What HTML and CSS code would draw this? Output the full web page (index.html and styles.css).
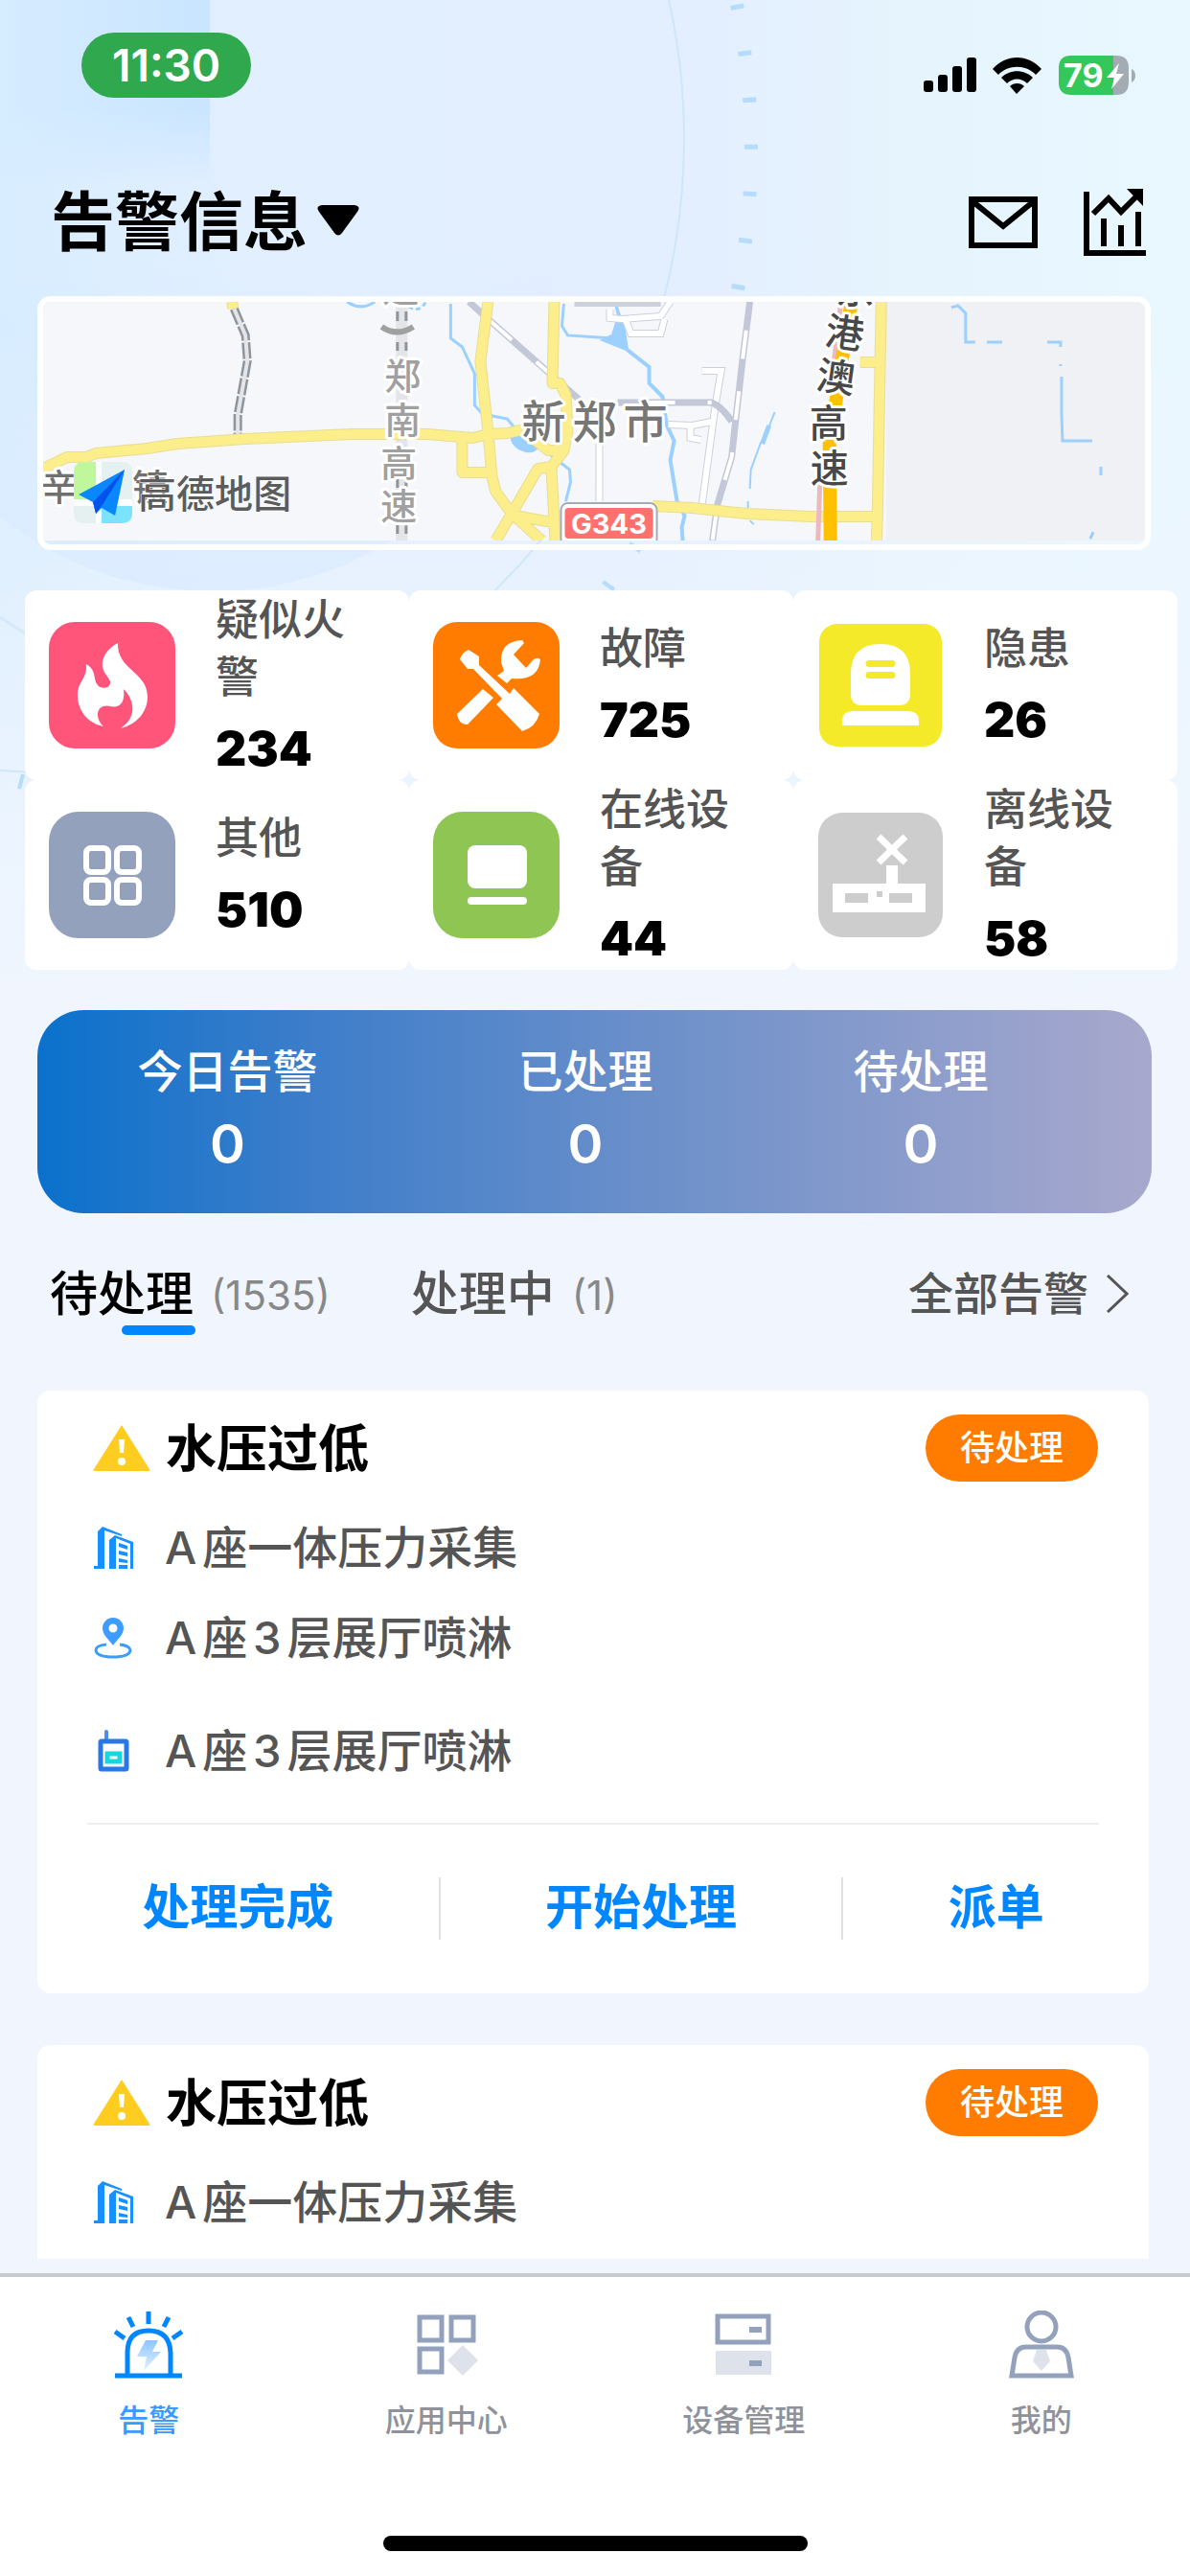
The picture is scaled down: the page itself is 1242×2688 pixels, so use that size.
FILE: index.html
```html
<!DOCTYPE html>
<html lang="zh-CN">
<head>
<meta charset="utf-8">
<meta name="viewport" content="width=device-width, initial-scale=1">
<title>告警信息</title>
<link rel="stylesheet" href="styles.css">
</head>
<body>
<svg class="backdrop" viewBox="0 0 1242 1100" preserveAspectRatio="xMidYMin slice" aria-hidden="true">
  <defs>
    <linearGradient id="sky" x1="0" x2="1" y1="0" y2="0">
      <stop offset="0" stop-color="#d8edff"/><stop offset=".2" stop-color="#e1efff"/><stop offset=".55" stop-color="#e3eeff"/><stop offset=".8" stop-color="#e6f5fd"/><stop offset="1" stop-color="#e9f7ff"/>
    </linearGradient>
    <linearGradient id="fade" x1="0" x2="0" y1="0" y2="1">
      <stop offset="0" stop-color="#f1f6fe" stop-opacity="0"/><stop offset=".3" stop-color="#f1f6fe" stop-opacity="0"/><stop offset=".95" stop-color="#f1f6fe"/>
    </linearGradient>
    <linearGradient id="corner" x1="0" x2="1" y1="0" y2="0">
      <stop offset="0" stop-color="#d6ecff"/><stop offset="1" stop-color="#c9e5ff"/>
    </linearGradient>
    <linearGradient id="cornerFade" x1="0" x2="0" y1="0" y2="1">
      <stop offset="0" stop-color="#fff"/><stop offset=".6" stop-color="#fff"/><stop offset="1" stop-color="#000"/>
    </linearGradient>
    <linearGradient id="disc" x1="0" x2="0" y1="0" y2="1">
      <stop offset=".5" stop-color="#d4e8ff" stop-opacity="0"/><stop offset="1" stop-color="#d4e8ff" stop-opacity=".5"/>
    </linearGradient>
    <mask id="cornerMask"><rect width="219" height="190" fill="url(#cornerFade)"/></mask>
  </defs>
  <rect width="1242" height="1100" fill="url(#sky)"/>
  <rect width="219" height="190" fill="url(#corner)" mask="url(#cornerMask)"/>
  <rect width="1242" height="1100" fill="url(#fade)"/>
  <circle cx="222" cy="260" r="357" fill="url(#disc)"/>
  <circle cx="53" cy="145" r="661" fill="none" stroke="#cfe6fb" stroke-width="2"/>
  <path d="M767 -5 A772 772 0 0 1 634 613" fill="none" stroke="#b5dcfb" stroke-width="14" stroke-dasharray="5 44" stroke-dashoffset="39"/>
  <path d="M24 808L20 823" stroke="#b5dcfb" stroke-width="4"/>
  <path d="M0 644L28 662" stroke="#d5e9fb" stroke-width="3"/>
</svg>
<div class="screen">
  <div class="status">
    <time class="clock">11:30</time>
    <svg class="status-icons" width="222" height="44" viewBox="0 0 222 44" role="img" aria-label="信号、无线网络与电量">
      <rect x="0" y="26" width="10" height="12" rx="3"/><rect x="15" y="20" width="10" height="18" rx="3"/><rect x="30" y="11" width="10" height="27" rx="3"/><rect x="45" y="2" width="10" height="36" rx="3"/>
      <path d="M72 14C86 -2 109 -2 123 14L117 20C107 9 88 9 78 20Z"/><path d="M81 23C90 14 105 14 114 23L108 29C102 23 93 23 87 29Z"/><path d="M90 32C94 28 101 28 105 32L97 40Z"/>
      <path d="M154 0H198V41H154Q141 41 141 28V13Q141 0 154 0Z" fill="#34c759"/><path d="M198 0H201Q214 0 214 13V28Q214 41 201 41H198Z" fill="#a3abb3"/><path d="M217 14Q221 16 221 21Q221 26 217 28Z" fill="#a3abb3"/>
      <text x="146" y="33" class="battery-text">79</text>
      <path d="M204 8L191 23H199L196 35L209 19H201Z" fill="#fff"/>
    </svg>
  </div>

  <header class="topbar">
    <button class="title" type="button">告警信息
      <svg width="44" height="34" viewBox="0 0 44 34" aria-hidden="true"><path d="M5 1H39Q46 2 42 8L26 30Q22 35 18 30L2 8Q-2 2 5 1Z"/></svg>
    </button>
    <div class="tools">
      <button type="button" aria-label="消息"><svg width="72" height="54" viewBox="0 0 72 54" fill="none" stroke="#000" stroke-width="6"><path d="M3 3H69V51H3Z"/><path d="M4 5L36 31L68 5"/></svg></button>
      <button type="button" aria-label="统计"><svg width="66" height="70" viewBox="0 0 66 70" fill="none" stroke="#000" stroke-width="6"><path d="M3 3V67H65M21 31V60M39 38V60M57 24V60"/><path d="M10 26L26 10L39 24L56 7"/><path d="M45 0H62V18Z" fill="#000" stroke="none"/></svg></button>
    </div>
  </header>

  <section class="map" aria-label="地图">
    <svg viewBox="46 315 1149 249" preserveAspectRatio="xMidYMid slice">
      <rect x="46" y="315" width="1149" height="249" fill="#f5f7fb"/>
      <rect x="925" y="315" width="270" height="249" fill="#eff1f4"/>
      <g fill="none" stroke="#9bd0ff" stroke-width="3">
        <path d="M363 315Q378 325 392 315M471 317V353L483 362L496 390V423L504 432L530 437L538 447M573 473L595 490L596 503L591 523"/>
        <path d="M427 320Q439 327 445 315" stroke-dasharray="5 3"/>
        <path d="M538 448Q530 460 543 468Q556 474 562 466Q572 468 576 474L560 463Q545 460 538 448Z" fill="#9bd0ff"/>
        <path d="M589 317L587 340L593 350L640 353L650 356"/><path d="M643 317L646 330L640 350L630 355L655 365L652 345Z" fill="#9bd0ff"/>
        <path d="M655 365L678 383V400L692 414L696 443L704 460L700 480L707 523L715 538L712 550L713 564" stroke-width="4"/>
        <path d="M809 430L801 450L794 463L784 490L783 510M781 523V530M783 543L787 547" stroke-width="2"/><path d="M803 444L796 463" stroke-width="5"/>
        <path d="M993 321L1000 319L1008 327V357H1018M1030 357H1046M1093 357H1107V362M1107 380V382M1108 393V430L1109 460H1140M1149 487V496M1141 555L1138 562"/>
      </g>
      <g fill="none" stroke="#ccd0dc" stroke-width="8">
        <path d="M733 387H753L747 423L733 527M698 443L723 444L743 440M721 445V457L732 459M626 463V523M637 323V332L649 333L690 330L700 315M653 333L659 348H690L694 333M600 316H690"/>
      </g>
      <g fill="none" stroke="#fff" stroke-width="6">
        <path d="M733 387H753L747 423L733 527M698 443L723 444L743 440M721 445V457L732 459M626 463V523M637 323V332L649 333L690 330L700 315M653 333L659 348H690L694 333"/>
      </g>
      <g fill="none" stroke="#c3c8d8" stroke-width="7">
        <path d="M490 315L510 333L605 417M645 420H743Q755 425 764 440M783 315L776 370L768 440L764 477L749 527L744 564"/>
        <path d="M490 315L510 333L605 417M645 420H743M783 315L776 370L768 440L764 477L749 527L744 564" stroke="#fff" stroke-width="4" stroke-dasharray="30 34" stroke-dashoffset="34"/>
      </g>
      <g fill="none" stroke="#8f959d" stroke-width="9">
        <path d="M245 322L257 350L259 377L249 433V453" stroke-dasharray="17 2"/>
        <path d="M245 322L257 350L259 377L249 433V453" stroke="#e4e5e8" stroke-width="4"/>
        <path d="M420 315V564" stroke="#e4e5e8" stroke-width="12"/>
        <path d="M420 325V335M420 357V366M420 500V509M420 548V557" stroke-width="12"/>
        <path d="M420 315V564" stroke="#e4e5e8" stroke-width="6"/>
      </g>
      <path fill="none" stroke="#e9dd92" stroke-width="12" stroke-linejoin="round" d="M46 489L71 477H91L101 473L154 468L186 463L257 458L368 453H447L494 457L510 453L530 452L552 447M510 315L502 377L510 450L514 497L518 513L534 535L566 564M483 458V493H512M579 315L577 400H585L591 412L593 450L589 470L576 487L580 564M576 487L562 489L534 537L518 564M534 537L577 545M560 460L573 470L589 470M243 315L244 322M682 528L723 530L780 536L846 539H917M920 315L918 423L916 540L915 564M898 378H919"/>
      <path fill="none" stroke="#fbee8b" stroke-width="10" stroke-linejoin="round" d="M46 489L71 477H91L101 473L154 468L186 463L257 458L368 453H447L494 457L510 453L530 452L552 447M510 315L502 377L510 450L514 497L518 513L534 535L566 564M483 458V493H512M579 315L577 400H585L591 412L593 450L589 470L576 487L580 564M576 487L562 489L534 537L518 564M534 537L577 545M560 460L573 470L589 470M243 315L244 322M682 528L723 530L780 536L846 539H917M920 315L918 423L916 540L915 564M898 378H919"/>
      <path d="M878 315L871 375M856 505L854 564" fill="none" stroke="#ecb9be" stroke-width="5"/>
      <path d="M889 315L880 370L866 463L867 564" fill="none" stroke="#ffc000" stroke-width="14"/>
      <g class="place gray">
        <text x="419" y="315">通</text><text x="421" y="406">郑</text><text x="421" y="452">南</text><text x="417" y="497">高</text><text x="417" y="542">速</text>
        <path d="M399 341Q415 352 432 341" fill="none" stroke="#a0a0a0"/>
      </g>
      <g class="place dark">
        <text x="893" y="316">京</text><text x="882" y="362" transform="rotate(8 882 347)">港</text><text x="873" y="408" transform="rotate(8 873 393)">澳</text><text x="865" y="456">高</text><text x="866" y="503">速</text>
      </g>
      <g class="place city"><text x="568" y="457">新</text><text x="621" y="457">郑</text><text x="674" y="457">市</text></g>
      <g class="place town"><text x="63" y="522">辛</text><text x="158" y="522">镇</text></g>
      <rect x="586" y="525" width="100" height="44" rx="7" fill="#fff" stroke="#a4adb5" stroke-width="2"/><rect x="590" y="530" width="92" height="32" rx="4" fill="#ff716f"/>
      <text class="route" x="636" y="557">G343</text>
      <rect x="78" y="482" width="61" height="64" rx="11" fill="#fbfcfd"/>
      <path d="M89 482H101V521H78V493Q78 482 89 482Z" fill="#c0f69c"/><path d="M107 482H128Q139 482 139 493V521H107Z" fill="#e5f0f0"/><path d="M78 528H101V546H89Q78 546 78 535Z" fill="#e5f0f0"/><path d="M107 528H139V535Q139 546 128 546H107Z" fill="#7ce3ff"/>
      <path d="M131 490L83 516L98 524L101 536L107 530L121 538Z" fill="#0a86ff"/><path d="M131 490L98 524L101 536L107 528Z" fill="#0053ea"/>
      <text class="brand" x="145" y="530">高德地图</text>
    </svg>
  </section>

  <ul class="stats">
    <li><svg viewBox="0 0 132 132" aria-hidden="true"><rect width="132" height="132" rx="27" fill="#ff557b"/><path fill="#fff" d="M72 22C60 28 53 40 57 50C59 56 65 60 64 64C63 70 54 70 51 66C46 60 50 50 39 44C40 60 30 62 30 76C30 94 42 106 57 109C49 102 49 90 57 88C63 86 66 90 71 88C78 86 79 78 78 70C90 82 92 100 75 111C94 106 103 92 103 78C103 52 71 50 72 22Z"/></svg><div><span>疑似火警</span><strong>234</strong></div></li>
    <li><svg viewBox="0 0 132 132" aria-hidden="true"><rect width="132" height="132" rx="25" fill="#ff7c00"/><path fill="#fff" d="M37 29L48 36V45L80 75L84 69L111 96Q107 110 93 114L66 86L72 80L42 49L36 49L28 39Q30 32 37 29Z"/><path fill="#fff" d="M93 19Q70 20 71 42L74 51L67 56L77 64L82 59Q110 62 112 39Q108 36 104 40L97 48L84 34L95 22ZM52 70L63 79L36 107Q27 108 25 96Z"/></svg><div><span>故障</span><strong>725</strong></div></li>
    <li><svg viewBox="0 0 132 132" aria-hidden="true"><rect x="2" y="2" width="128" height="128" rx="19" fill="#f4ea29"/><path fill="#fff" d="M35 54Q35 23 66 23T97 54V75Q97 87 85 87H47Q35 87 35 75ZM26 108V103Q26 93 38 93H94Q106 93 106 103V108Z"/><path d="M54 43.500H78M54 55.500H78" stroke="#f4ea29" stroke-width="7" stroke-linecap="round"/></svg><div><span>隐患</span><strong>26</strong></div></li>
    <li><svg viewBox="0 0 132 132" aria-hidden="true"><rect width="132" height="132" rx="31" fill="#94a1bd"/><g fill="none" stroke="#fff" stroke-width="6"><rect x="39" y="38" width="23" height="25" rx="5"/><rect x="71" y="38" width="23" height="25" rx="5"/><rect x="39" y="71" width="23" height="24" rx="5"/><rect x="71" y="71" width="23" height="24" rx="5"/></g></svg><div><span>其他</span><strong>510</strong></div></li>
    <li><svg viewBox="0 0 132 132" aria-hidden="true"><rect width="132" height="132" rx="31" fill="#8ec553"/><rect x="36" y="35" width="62" height="45" rx="8" fill="#fff"/><rect x="36" y="89" width="62" height="8" rx="4" fill="#fff"/></svg><div><span>在线设备</span><strong>44</strong></div></li>
    <li><svg viewBox="0 0 132 132" aria-hidden="true"><rect x="1" y="1" width="130" height="130" rx="25" fill="#cdcdcd"/><path d="M64 26L92 53M92 26L64 53" stroke="#fff" stroke-width="7"/><path fill="#fff" d="M72 56H84V75H113V105H16V75H72Z"/><path fill="#cdcdcd" d="M29 85H53V95H29ZM75 85H99V95H75ZM62 83H68V89H62Z"/></svg><div><span>离线设备</span><strong>58</strong></div></li>
  </ul>

  <dl class="summary">
    <div><dt>今日告警</dt><dd>0</dd></div>
    <div><dt>已处理</dt><dd>0</dd></div>
    <div><dt>待处理</dt><dd>0</dd></div>
  </dl>

  <div class="tabs">
    <button class="tab active" type="button"><span class="tab-name">待处理</span><span class="count">(1535)</span></button>
    <button class="tab" type="button"><span class="tab-name">处理中</span><span class="count">(1)</span></button>
    <a class="all" href="#all">全部告警<svg width="24" height="40" viewBox="0 0 24 40" fill="none" stroke="#555" stroke-width="3" aria-hidden="true"><path d="M2 1L22 20L2 39"/></svg></a>
  </div>

  <main class="list">
    <article class="card">
      <div class="card-head">
        <svg width="60" height="50" viewBox="0 0 60 50" aria-hidden="true"><path d="M30 1L59 47Q60 49 58 49H2Q0 49 1 47Z" fill="#ffcd1f"/><path d="M27 16H33L32 30H28Z" fill="#fff"/><circle cx="30" cy="39" r="4" fill="#fff"/></svg>
        <h2>水压过低</h2><span class="tag">待处理</span>
      </div>
      <p class="line"><svg class="ico" viewBox="0 0 44 44" aria-hidden="true"><path fill="#1890ff" d="M1 41H5V5L10 0L30 8V10L12 4V44H1ZM17 14L23 9L42 16V44H39V18L24 12V44H17ZM27 17L36 20V24L27 21ZM27 25L36 27V31L27 29ZM27 33L36 35V38L27 37ZM27 40H36V44H27Z"/></svg>A座一体压力采集</p>
      <p class="line"><svg class="ico" viewBox="0 0 44 44" aria-hidden="true"><path fill="#3c9cff" fill-rule="evenodd" d="M21 1A11 11 0 0 1 32 12C32 19 25 24 21 30C17 24 10 19 10 12A11 11 0 0 1 21 1ZM21 7.500A4.500 4.500 0 1 0 21 16.500A4.500 4.500 0 1 0 21 7.500Z"/><path d="M14 29Q3 30 3 35Q4 42 21 42T39 35Q38 30 28 29" fill="none" stroke="#3c9cff" stroke-width="3"/></svg>A座3层展厅喷淋</p>
      <p class="line device"><svg class="ico" viewBox="0 0 44 44" aria-hidden="true"><path d="M14 2V11" stroke="#4d8df0" stroke-width="4" stroke-linecap="round"/><rect x="8" y="12" width="27" height="29" rx="1" fill="none" stroke="#2878e8" stroke-width="5"/><rect x="15" y="25" width="13" height="8" fill="#fff" stroke="#18d6e0" stroke-width="5"/></svg>A座3层展厅喷淋</p>
      <div class="actions"><button type="button">处理完成</button><i></i><button type="button">开始处理</button><i></i><button type="button">派单</button></div>
    </article>
    <article class="card">
      <div class="card-head">
        <svg width="60" height="50" viewBox="0 0 60 50" aria-hidden="true"><path d="M30 1L59 47Q60 49 58 49H2Q0 49 1 47Z" fill="#ffcd1f"/><path d="M27 16H33L32 30H28Z" fill="#fff"/><circle cx="30" cy="39" r="4" fill="#fff"/></svg>
        <h2>水压过低</h2><span class="tag">待处理</span>
      </div>
      <p class="line"><svg class="ico" viewBox="0 0 44 44" aria-hidden="true"><path fill="#1890ff" d="M1 41H5V5L10 0L30 8V10L12 4V44H1ZM17 14L23 9L42 16V44H39V18L24 12V44H17ZM27 17L36 20V24L27 21ZM27 25L36 27V31L27 29ZM27 33L36 35V38L27 37ZM27 40H36V44H27Z"/></svg>A座一体压力采集</p>
    </article>
  </main>

  <nav class="nav">
    <a class="current" href="#alarm"><svg viewBox="0 0 72 72" aria-hidden="true"><defs><linearGradient id="bolt" x1="0" x2="0" y1="0" y2="1"><stop offset="0" stop-color="#8cc6ff"/><stop offset="1" stop-color="#e4f2ff"/></linearGradient></defs><g fill="none" stroke="#0086ff" stroke-width="5"><path d="M14 66V44Q14 21 36 21T59 44V66M1 68H71M36 1V14M15 7L20 17M57 7L52 17M1 22L11 29M71 22L61 29"/></g><path d="M33 31H46L40 43H49L31 63L34 48H24Z" fill="url(#bolt)"/></svg>告警</a>
    <a href="#apps"><svg viewBox="0 0 72 72" aria-hidden="true"><g fill="none" stroke="#94a1bd" stroke-width="5"><path d="M8 7H31V31H8ZM41 7H64V31H41ZM8 40H31V64H8Z"/></g><path d="M53 36L69 52L53 68L37 52Z" fill="#dee2ea"/></svg>应用中心</a>
    <a href="#devices"><svg viewBox="0 0 72 72" aria-hidden="true"><path d="M9 6H62V33H9Z" fill="none" stroke="#94a1bd" stroke-width="5"/><path d="M7 42H65V67H7Z" fill="#dee2ea"/><path d="M42 17H55V23H42ZM42 52H55V58H42Z" fill="#94a1bd"/></svg>设备管理</a>
    <a href="#me"><svg viewBox="0 0 72 72" aria-hidden="true"><g fill="none" stroke="#94a1bd" stroke-width="5"><circle cx="36" cy="17" r="15"/><path d="M5 68L8 49Q10 38 20 38H52Q62 38 64 49L67 68Z"/></g><path d="M31 41H41L45 53L36 63L27 53Z" fill="#dee2ea"/></svg>我的</a>
  </nav>
  <div class="home"><span></span></div>
</div>
</body>
</html>
```
FILE: styles.css
```css
* { box-sizing: border-box; }
body {
  margin: 0;
  background: #f1f6fe;
  color: #000;
  font-family: Inter, "Noto Sans CJK SC", sans-serif;
}
button { border: 0; padding: 0; background: none; color: inherit; font: inherit; }
a { color: inherit; text-decoration: none; }
svg { display: block; flex: none; }
h2, p, dl, dd, ul { margin: 0; padding: 0; }

.backdrop { position: absolute; top: 0; left: 0; z-index: -1; width: 100%; height: 1100px; }
.screen { display: flex; flex-direction: column; height: 100vh; }

.status { display: flex; justify-content: space-between; align-items: flex-end; padding: 34px 56px 0 85px; }
.clock { padding: 0 32px; border-radius: 34px; background: #30a84d; color: #fff; font-size: 46px; font-weight: 600; line-height: 68px; }
.battery-text { fill: #fff; font-size: 34px; font-weight: 700; }

.topbar { display: flex; justify-content: space-between; align-items: center; height: 155px; margin-top: 52px; padding: 0 45px 0 53px; }
.title { display: flex; align-items: center; gap: 10px; font-size: 67px; font-weight: 700; line-height: 94px; }
.title svg { margin-bottom: 4px; }
.tools { display: flex; align-items: center; gap: 48px; }

.map { margin: 0 41px 0 39px; padding-bottom: 4px; border: 6px solid #fff; border-radius: 14px; overflow: hidden; }
.map svg { width: 100%; height: 249px; border-radius: 8px 8px 0 0; }
.place { text-anchor: middle; stroke: #fff; stroke-width: 6px; paint-order: stroke; stroke-linejoin: round; }
.gray { fill: #a0a0a0; font-size: 38px; font-weight: 500; }
.dark { fill: #484848; font-size: 40px; font-weight: 500; }
.city { fill: #777; font-size: 46px; font-weight: 500; }
.town { fill: #707070; font-size: 38px; font-weight: 500; }
.route { fill: #fff; font-size: 29px; font-weight: 700; text-anchor: middle; }
.brand { fill: #5c5c5c; stroke: #fff; stroke-width: 1px; paint-order: stroke; font-size: 40px; font-weight: 500; }

.stats { display: grid; grid-template-columns: repeat(3, 1fr); margin: 42px 13px 0 26px; list-style: none; }
.stats li { display: flex; align-items: center; gap: 42px; height: 198px; padding: 0 36px 0 25px; border-radius: 12px; background: #fff; }
.stats li svg { width: 132px; height: 132px; }
.stats span { display: block; color: #555; font-size: 45px; font-weight: 500; line-height: 60px; }
.stats strong { display: block; margin-top: 11px; font-size: 50px; font-weight: 900; line-height: 66px; }

.summary { display: flex; justify-content: space-around; margin: 42px 40px 0 39px; padding: 30px 66px 29px 0; border-radius: 48px; background: linear-gradient(90deg, #0a71cc, #3c7dca 24%, #6a8fca 54%, #a8a8cd); color: #fff; text-align: center; }
.summary dt { font-size: 47px; font-weight: 500; line-height: 68px; }
.summary dd { font-size: 56px; font-weight: 600; line-height: 85px; }

.tabs { display: flex; align-items: center; margin: 45px 64px 0 52px; line-height: 74px; }
.tab { position: relative; display: flex; align-items: center; gap: 18px; margin-right: 84px; color: #555; }
.tab-name { font-size: 50px; font-weight: 500; }
.active { color: #000; }
.active::after { content: ""; position: absolute; left: 75px; bottom: -4px; width: 77px; height: 10px; border-radius: 5px; background: #0086ff; }
.count { padding-top: 4px; color: #888; font-size: 42px; }
.all { display: flex; align-items: center; gap: 18px; margin-left: auto; color: #555; font-size: 47px; font-weight: 500; }

.list { flex: 1; min-height: 0; margin: 62px 43px 15px 39px; overflow: hidden; }
.card { min-height: 629px; margin-bottom: 54px; padding-top: 25px; border-radius: 14px; background: #fff; }
.card-head { display: flex; align-items: center; gap: 16px; padding: 0 53px 0 58px; margin-bottom: 22px; }
.card-head h2 { flex: 1; padding-top: 2px; font-size: 53px; font-weight: 700; line-height: 68px; }
.tag { padding: 0 36px; border-radius: 35px; background: #ff7c00; color: #fff; font-size: 36px; font-weight: 500; line-height: 70px; }
.line { display: flex; align-items: center; gap: 31px; padding: 0 58px; color: #555; font-size: 47px; font-weight: 500; line-height: 94px; text-autospace: normal; }
.ico { width: 44px; height: 44px; }
.device { margin-top: 24px; }
.actions { display: flex; justify-content: space-evenly; align-items: center; height: 178px; margin-top: 28px; color: #0086ff; font-size: 50px; font-weight: 700; line-height: 72px; background: linear-gradient(#eee, #eee) center top / calc(100% - 104px) 2px no-repeat; }
.actions button { padding-bottom: 2px; }
.actions i { width: 2px; height: 65px; background: #e2e2e2; }

.nav { display: grid; grid-template-columns: repeat(4, 1fr); border-top: 4px solid #c9cacd; padding-top: 35px; background: #fff; }
.nav a { display: flex; flex-direction: column; align-items: center; gap: 19px; color: #8f929b; font-size: 32px; font-weight: 500; line-height: 48px; }
.nav svg { width: 72px; height: 72px; }
.nav .current { color: #3b99ff; }
.home { display: flex; justify-content: center; padding: 96px 0 26px; background: #fff; }
.home span { width: 443px; height: 16px; border-radius: 8px; background: #000; }
```
